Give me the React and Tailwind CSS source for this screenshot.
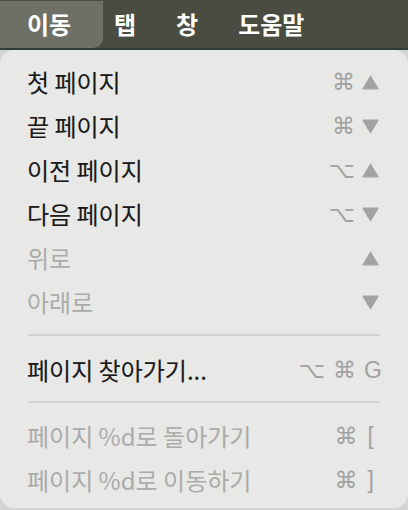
import React from "react";

const font = { fontFamily: '"Noto Sans CJK KR", "Noto Sans", sans-serif' };
const sym = { fontFamily: '"DejaVu Sans", sans-serif' };

function Up() {
  return (
    <svg width="17" height="15" viewBox="0 0 17 15">
      <path d="M8.5 1.2 L16 13.8 L1 13.8 Z" fill="#a2a2a2" stroke="#a2a2a2" strokeWidth="1.2" strokeLinejoin="round" />
    </svg>
  );
}

function Down() {
  return (
    <svg width="17" height="15" viewBox="0 0 17 15">
      <path d="M1 1.2 L16 1.2 L8.5 13.8 Z" fill="#a2a2a2" stroke="#a2a2a2" strokeWidth="1.2" strokeLinejoin="round" />
    </svg>
  );
}

function Cmd() {
  return <span className="text-[23px] leading-none text-[#a2a2a2]" style={sym}>⌘</span>;
}

function Opt() {
  return <span className="text-[23px] leading-none text-[#a2a2a2]" style={sym}>⌥</span>;
}

const items = [
  { label: "첫 페이지", keys: [<Cmd />, <Up />] },
  { label: "끝 페이지", keys: [<Cmd />, <Down />] },
  { label: "이전 페이지", keys: [<Opt />, <Up />] },
  { label: "다음 페이지", keys: [<Opt />, <Down />] },
  { label: "위로", disabled: true, keys: [<Up />] },
  { label: "아래로", disabled: true, keys: [<Down />] },
];

function Row({ label, disabled, keys }) {
  return (
    <div className="flex h-[44px] items-center justify-between pl-[27px] pr-[29px]">
      <span className={"text-[24px] " + (disabled ? "text-[#ababab]" : "text-[#1a1a1a] [-webkit-text-stroke:0.12px_#1a1a1a]")}>{label}</span>
      <div className="flex items-center gap-[7px]">
        {keys.map((k, i) => (
          <span key={i} className="flex items-center">{k}</span>
        ))}
      </div>
    </div>
  );
}

function Separator() {
  return <div className="mx-[28px] h-[2px] bg-[#d2d2d0]" />;
}

export default function App() {
  return (
    <div className="h-[510px] w-[408px] overflow-hidden bg-[#d4d4d2]" style={font}>
      <div className="flex h-[48px] items-center bg-[#4a4c41] text-[24px] font-semibold text-white">
        <div className="flex h-[47px] w-[103px] items-center rounded-br-[10px] bg-[#6e7066] pl-[27px]">이동</div>
        <span className="ml-[11px]">탭</span>
        <span className="ml-[40px]">창</span>
        <span className="ml-[40px]">도움말</span>
      </div>
      <div className="h-[2px] bg-[#2f3a3c]" />
      <div className="h-[458px] rounded-[14px] bg-[#e8e8e6] pt-[10px]">
        {items.map((it) => (
          <Row key={it.label} {...it} />
        ))}
        <div className="h-[10px]" />
        <Separator />
        <div className="h-[12px]" />
        <div className="flex h-[44px] items-center justify-between pl-[27px] pr-[26px]">
          <span className="text-[24px] text-[#1a1a1a] [-webkit-text-stroke:0.12px_#1a1a1a]">페이지 찾아가기...</span>
          <div className="flex items-center gap-[8px]">
            <Opt />
            <Cmd />
            <span className="text-[23px] leading-none text-[#a2a2a2]" style={{ fontFamily: '"Liberation Sans", sans-serif' }}>G</span>
          </div>
        </div>
        <div className="h-[9px]" />
        <Separator />
        <div className="h-[11px]" />
        {["페이지 %d로 돌아가기", "페이지 %d로 이동하기"].map((l, i) => (
          <div key={l} className="flex h-[44px] items-center justify-between pl-[27px] pr-[34px]">
            <span className="text-[24px] text-[#ababab]">{l}</span>
            <div className="flex items-center gap-[10px]">
              <Cmd />
              <span className="text-[23px] leading-none text-[#a2a2a2]" style={{ fontFamily: '"Liberation Sans", sans-serif' }}>{i === 0 ? "[" : "]"}</span>
            </div>
          </div>
        ))}
      </div>
    </div>
  );
}
